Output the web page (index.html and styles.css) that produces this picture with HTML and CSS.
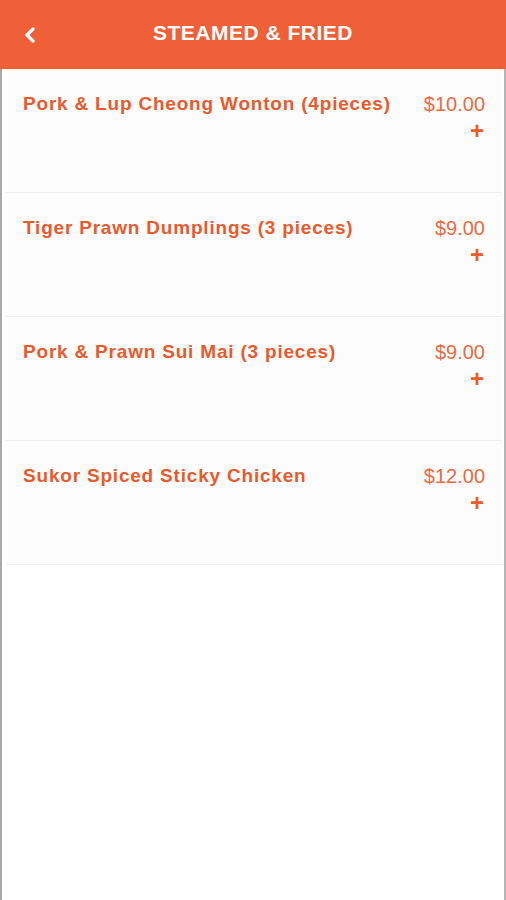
FILE: index.html
```html
<!DOCTYPE html>
<html lang="en">
<head>
  <meta charset="UTF-8" />
  <meta name="viewport" content="width=device-width, initial-scale=1.0" />
  <title>Steamed &amp; Fried</title>
  <link rel="stylesheet" href="styles.css">
</head>
<body>
  <div class="screen">
    <div class="header">
      <button class="back">
        <svg width="12" height="16" viewBox="0 0 12 16"><path d="M9 2 L3 8 L9 14" fill="none" stroke="#fff" stroke-width="3.2" stroke-linecap="round" stroke-linejoin="round"/></svg>
      </button>
      <h1>STEAMED &amp; FRIED</h1>
    </div>

    <div class="menu">
      <div class="item">
        <div class="name">Pork &amp; Lup Cheong Wonton (4pieces)</div>
        <div class="side">
          <div class="price">$10.00</div>
          <div class="add">+</div>
        </div>
      </div>
      <div class="item">
        <div class="name">Tiger Prawn Dumplings (3 pieces)</div>
        <div class="side">
          <div class="price">$9.00</div>
          <div class="add">+</div>
        </div>
      </div>
      <div class="item">
        <div class="name">Pork &amp; Prawn Sui Mai (3 pieces)</div>
        <div class="side">
          <div class="price">$9.00</div>
          <div class="add">+</div>
        </div>
      </div>
      <div class="item">
        <div class="name">Sukor Spiced Sticky Chicken</div>
        <div class="side">
          <div class="price">$12.00</div>
          <div class="add">+</div>
        </div>
      </div>
    </div>
  </div>
</body>
</html>
```

FILE: styles.css
```css
body {
  margin: 0;
  font-family: 'Liberation Sans', Arial, sans-serif;
  background: #fff;
}

.screen {
  height: 900px;
  box-sizing: border-box;
  border-left: 2px solid #a9a9a9;
  border-right: 2px solid #b5b5b5;
  display: flex;
  flex-direction: column;
}

.header {
  height: 69px;
  background: #f06038;
  display: flex;
  align-items: center;
  justify-content: center;
  position: relative;
  margin: 0 -2px;
}

.header h1 {
  margin: 0;
  color: #fff;
  font-size: 21px;
  font-weight: bold;
  letter-spacing: 0.5px;
  padding-bottom: 3px;
}

.back {
  position: absolute;
  left: 24px;
  top: 27px;
  padding: 0;
  border: none;
  background: none;
  display: flex;
}

.menu {
  display: flex;
  flex-direction: column;
  padding: 0 2px 0 4px;
}

.item {
  height: 124px;
  background: #fcfcfc;
  border-bottom: 1px solid #eeeeee;
  display: flex;
  justify-content: space-between;
  padding: 23px 17px 0 17px;
  box-sizing: border-box;
}

.name {
  color: #e95a2c;
  font-size: 19px;
  font-weight: bold;
  letter-spacing: 0.8px;
  line-height: 24px;
}

.side {
  display: flex;
  flex-direction: column;
  align-items: flex-end;
}

.price {
  color: #ec6a42;
  font-size: 20px;
  line-height: 24px;
}

.add {
  color: #e95a2c;
  font-size: 24px;
  font-weight: bold;
  line-height: 22px;
  margin-top: 4px;
  margin-right: 1px;
}
```
